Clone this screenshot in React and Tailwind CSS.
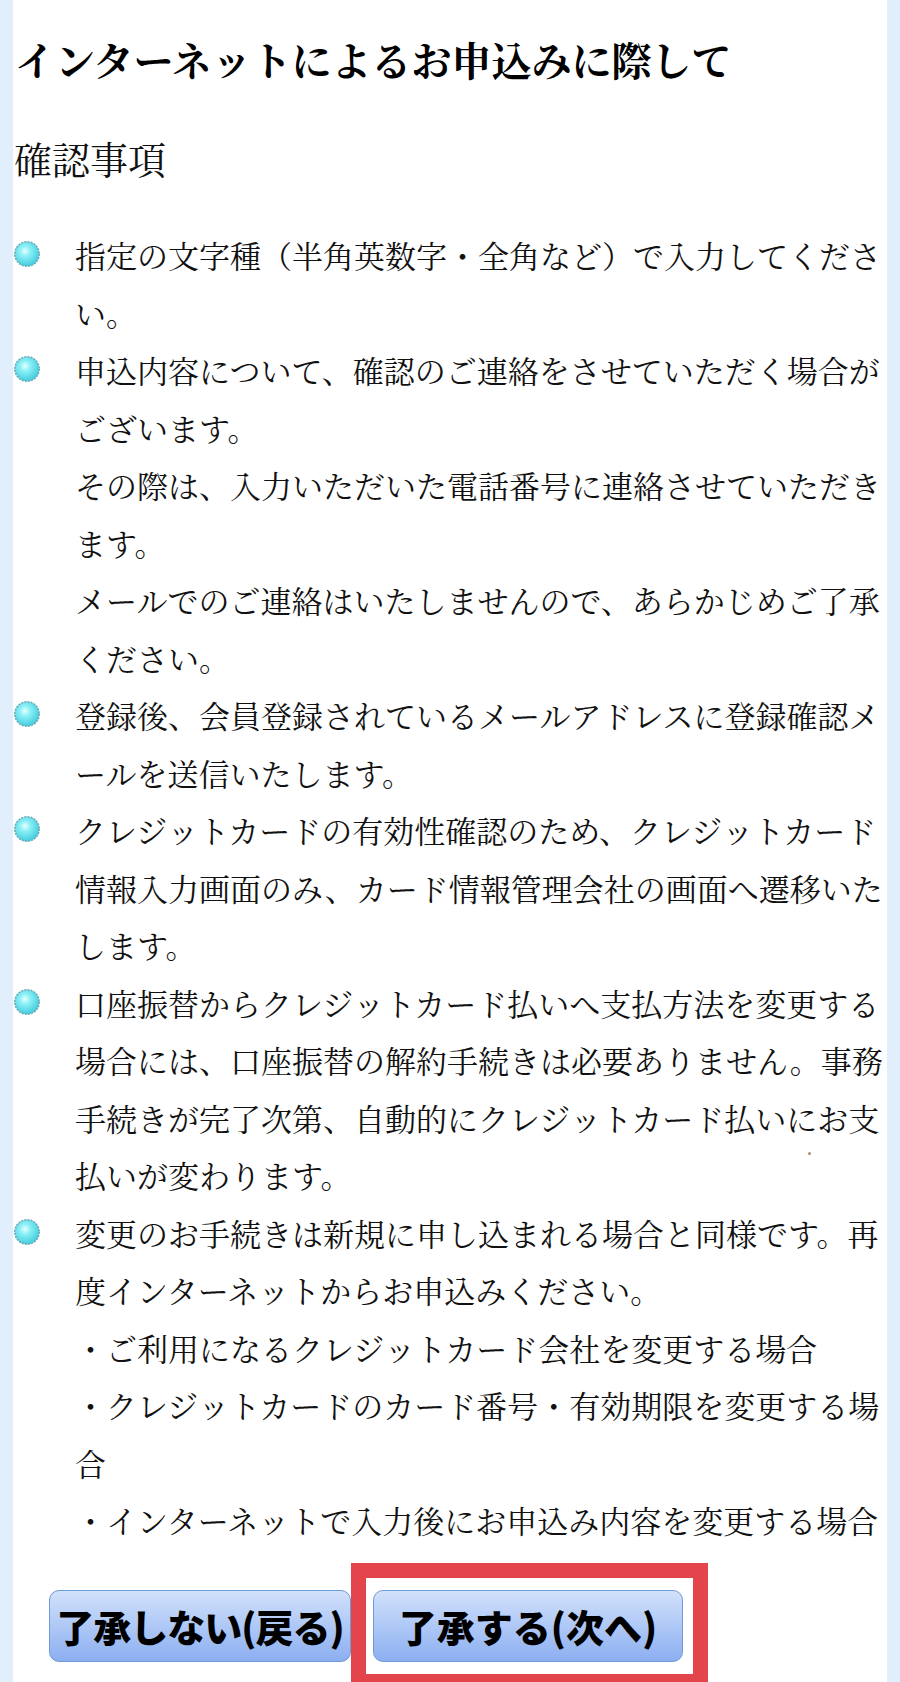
import React from "react";

const items = [
    ["指定の文字種（半角英数字・全角など）で入力してくださ", "い。"],
    [
        "申込内容について、確認のご連絡をさせていただく場合が",
        "ございます。",
        "その際は、入力いただいた電話番号に連絡させていただき",
        "ます。",
        "メールでのご連絡はいたしませんので、あらかじめご了承",
        "ください。",
    ],
    ["登録後、会員登録されているメールアドレスに登録確認メ", "ールを送信いたします。"],
    [
        "クレジットカードの有効性確認のため、クレジットカード",
        "情報入力画面のみ、カード情報管理会社の画面へ遷移いた",
        "します。",
    ],
    [
        "口座振替からクレジットカード払いへ支払方法を変更する",
        "場合には、口座振替の解約手続きは必要ありません。事務",
        "手続きが完了次第、自動的にクレジットカード払いにお支",
        "払いが変わります。",
    ],
    [
        "変更のお手続きは新規に申し込まれる場合と同様です。再",
        "度インターネットからお申込みください。",
        "・ご利用になるクレジットカード会社を変更する場合",
        "・クレジットカードのカード番号・有効期限を変更する場",
        "合",
        "・インターネットで入力後にお申込み内容を変更する場合",
    ],
];

function Bullet() {
    return (
        <svg width="28" height="28" viewBox="0 0 28 28" className="block">
            <defs>
                <radialGradient id="bl" cx="42%" cy="38%" r="60%">
                    <stop offset="0%" stopColor="#e9ffff" />
                    <stop offset="35%" stopColor="#8cf0f6" />
                    <stop offset="100%" stopColor="#48cfdf" />
                </radialGradient>
            </defs>
            <circle cx="14" cy="14" r="12.2" fill="url(#bl)" stroke="#6eaab9" strokeWidth="1.6" strokeDasharray="2 1.2" />
        </svg>
    );
}

export default function App() {
    return (
        <div className="relative w-[900px] h-[1682px] overflow-hidden bg-[#e1effc]">
            <div className="mx-[13px] h-full bg-white pt-[35px] text-[#111] font-['Noto_Serif_CJK_JP','Noto_Sans_CJK_JP',sans-serif]">
                <h1 className="pl-[2px] text-[40px] leading-[48px] font-bold text-black whitespace-nowrap">
                    インターネットによるお申込みに際して
                </h1>
                <h2 className="mt-[51px] pl-[1px] text-[38px] leading-[48px] font-normal">確認事項</h2>

                <ul className="mt-[44px]">
                    {items.map((lines, i) => (
                        <li key={i} className="flex">
                            <div className="w-[62px] shrink-0 pt-[14px]">
                                <Bullet />
                            </div>
                            <div className="text-[31px] leading-[57.5px]">
                                {lines.map((l, j) => (
                                    <div key={j} className="whitespace-nowrap">{l}</div>
                                ))}
                            </div>
                        </li>
                    ))}
                </ul>

                <div className="mt-[41px] flex gap-[22px] pl-[36px] font-['Noto_Sans_CJK_JP',sans-serif]">
                    <button className="w-[302px] h-[72px] rounded-[10px] border border-[#6f9bd6] bg-gradient-to-b from-[#d2e1fb] to-[#8caff0] text-[38px] font-black text-black leading-none tracking-[-1px] whitespace-nowrap">
                        了承しない(戻る)
                    </button>
                    <button className="w-[310px] h-[72px] rounded-[10px] border border-[#6f9bd6] bg-gradient-to-b from-[#d2e1fb] to-[#8caff0] text-[38px] font-black text-black leading-none whitespace-nowrap">
                        了承する(次へ)
                    </button>
                </div>
            </div>

            {/* highlight frame over the confirm button */}
            <div className="absolute left-[351px] top-[1563px] w-[357px] h-[126px] border-[15px] border-[#e4444c]" />
            <div className="absolute left-[808px] top-[1152px] w-[3px] h-[3px] rounded-full bg-[#b08a6a]" />
        </div>
    );
}
